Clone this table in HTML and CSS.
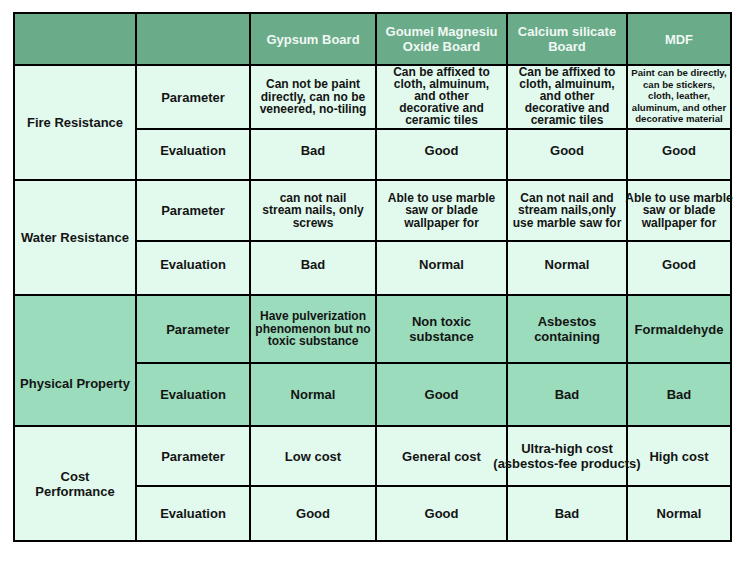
FILE: index.html
```html
<!DOCTYPE html>
<html>
<head>
<meta charset="utf-8">
<link rel="stylesheet" href="styles.css">
</head>
<body>
<div class="grid">
  <div class="c hd"></div>
  <div class="c hd"></div>
  <div class="c hd"><span>Gypsum Board</span></div>
  <div class="c hd"><span>Goumei Magnesiu<br>Oxide Board</span></div>
  <div class="c hd"><span>Calcium silicate<br>Board</span></div>
  <div class="c hd"><span>MDF</span></div>

  <div class="c lt span2 sec"><span>Fire Resistance</span></div>
  <div class="c lt"><span>Parameter</span></div>
  <div class="c lt sm"><span>Can not be paint<br>directly, can no be<br>veneered, no-tiling</span></div>
  <div class="c lt sm tight"><span>Can be affixed to<br>cloth, almuinum,<br>and other<br>decorative and<br>ceramic tiles</span></div>
  <div class="c lt sm tight"><span>Can be affixed to<br>cloth, almuinum,<br>and other<br>decorative and<br>ceramic tiles</span></div>
  <div class="c lt xs"><span>Paint can be directly,<br>can be stickers,<br>cloth, leather,<br>aluminum, and other<br>decorative material</span></div>
  <div class="c lt up"><span>Evaluation</span></div>
  <div class="c lt up"><span>Bad</span></div>
  <div class="c lt up"><span>Good</span></div>
  <div class="c lt up"><span>Good</span></div>
  <div class="c lt up"><span>Good</span></div>

  <div class="c lt span2 sec"><span>Water Resistance</span></div>
  <div class="c lt"><span>Parameter</span></div>
  <div class="c lt sm"><span>can not nail<br>stream nails, only<br>screws</span></div>
  <div class="c lt sm"><span>Able to use marble<br>saw or blade<br>wallpaper for</span></div>
  <div class="c lt sm"><span>Can not nail and<br>stream nails,only<br>use marble saw for</span></div>
  <div class="c lt sm"><span>Able to use marble<br>saw or blade<br>wallpaper for</span></div>
  <div class="c lt up"><span>Evaluation</span></div>
  <div class="c lt up"><span>Bad</span></div>
  <div class="c lt up"><span>Normal</span></div>
  <div class="c lt up"><span>Normal</span></div>
  <div class="c lt up"><span>Good</span></div>

  <div class="c md span2 sec low"><span>Physical Property</span></div>
  <div class="c md shift"><span>Parameter</span></div>
  <div class="c md sm"><span>Have pulverization<br>phenomenon but no<br>toxic substance</span></div>
  <div class="c md two"><span>Non toxic<br>substance</span></div>
  <div class="c md two"><span>Asbestos<br>containing</span></div>
  <div class="c md"><span>Formaldehyde</span></div>
  <div class="c md"><span>Evaluation</span></div>
  <div class="c md"><span>Normal</span></div>
  <div class="c md"><span>Good</span></div>
  <div class="c md"><span>Bad</span></div>
  <div class="c md"><span>Bad</span></div>

  <div class="c lt span2 sec two"><span>Cost<br>Performance</span></div>
  <div class="c lt"><span>Parameter</span></div>
  <div class="c lt"><span>Low cost</span></div>
  <div class="c lt"><span>General cost</span></div>
  <div class="c lt two"><span class="over">Ultra-high cost<br>(asbestos-fee products)</span></div>
  <div class="c lt"><span>High cost</span></div>
  <div class="c lt"><span>Evaluation</span></div>
  <div class="c lt"><span>Good</span></div>
  <div class="c lt"><span>Good</span></div>
  <div class="c lt"><span>Bad</span></div>
  <div class="c lt"><span>Normal</span></div>
</div>
</body>
</html>
```
FILE: styles.css
```css
html, body {
  margin: 0;
  padding: 0;
  background: #ffffff;
}

body {
  padding: 12px 0 0 13px;
  font-family: "Liberation Sans", Arial, sans-serif;
}

.grid {
  display: grid;
  width: max-content;
  grid-template-columns: 120px 112px 124px 129px 118px 102px;
  grid-template-rows: 50px 62px 49px 59px 52px 66px 61px 58px 53px;
  gap: 2px;
  padding: 2px;
  background: #000000;
}

.c {
  display: flex;
  align-items: center;
  justify-content: center;
  text-align: center;
  font-weight: bold;
  font-size: 13px;
  line-height: 15px;
  color: #141414;
  white-space: nowrap;
  min-width: 0;
}

.hd {
  background: #6aab8a;
  color: #f0f8f3;
}

.lt {
  background: #e2faee;
}

.md {
  background: #9bdcbc;
}

.span2 {
  grid-row: span 2;
}

.sm {
  font-size: 12px;
  line-height: 12.5px;
}

.tight {
  line-height: 12px;
  padding-bottom: 2px;
}

.xs {
  font-size: 9.6px;
  line-height: 11.5px;
  padding-bottom: 2px;
}

.up {
  padding-bottom: 8px;
}

.low {
  padding-top: 45px;
}

.shift {
  padding-left: 10px;
}

.two {
  line-height: 15px;
}

.over {
  z-index: 1;
}
```
